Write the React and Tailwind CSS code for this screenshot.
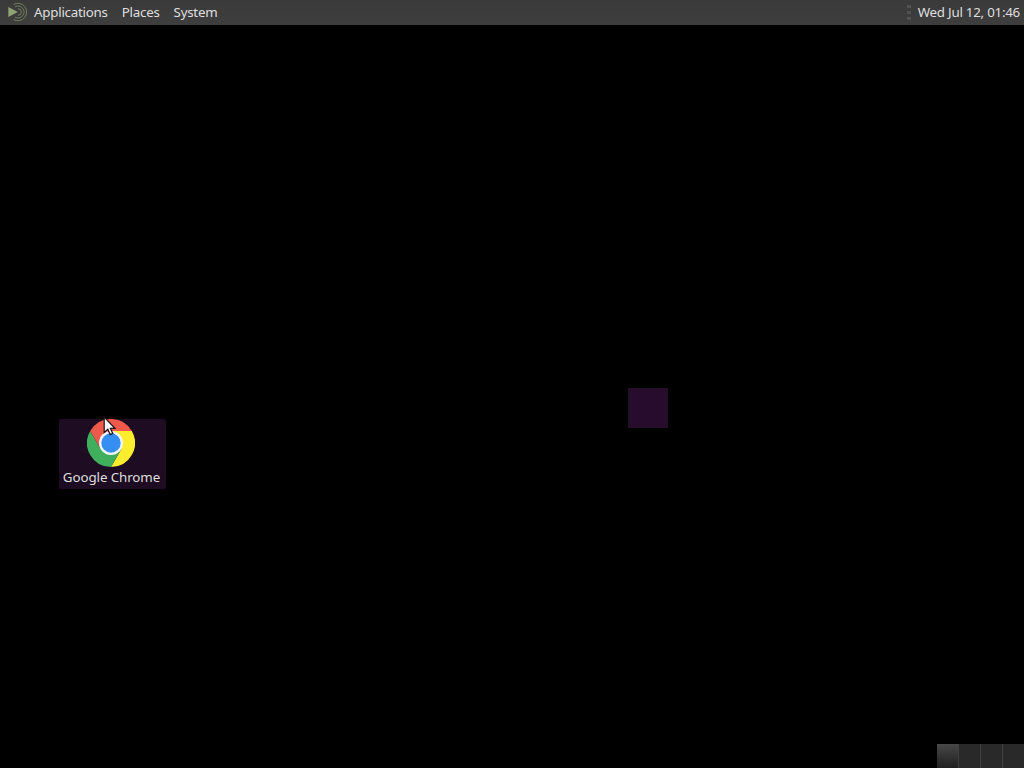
import React from 'react';

const menus = ['Applications', 'Places', 'System'];

function MenuLogo() {
  return (
    <svg width="20" height="20" viewBox="0 0 20 20" fill="none" className="shrink-0">
      <path d="M6.5 2.5A8.7 8.7 0 1 1 6.5 17.5" stroke="#727f5c" strokeWidth="1" />
      <path d="M8 4.9A5.9 5.9 0 1 1 8 15.1" stroke="#727f5c" strokeWidth="1" />
      <path d="M11 6.7a3.3 3.3 0 0 1 0 6.6" stroke="#727f5c" strokeWidth="1" />
      <path d="M1.3 5v10L10.8 10z" fill="#8fa374" />
    </svg>
  );
}

function ChromeIcon() {
  return (
    <svg width="48" height="48" viewBox="0 0 48 48" className="shrink-0">
      <path d="M24 24 3.2 12A24 24 0 0 1 44.8 12H24z" fill="#ed594a" />
      <path d="M24 12h20.8A24 24 0 0 1 24 48l10.4-18z" fill="#fcee2f" />
      <path d="M3.2 12A24 24 0 0 0 24 48l10.4-18H24L13.6 30z" fill="#3fae5d" />
      <path d="M3.2 12 13.6 30 24 24V12z" fill="#ed594a" />
      <circle cx="24" cy="24" r="12" fill="#f4f5fa" />
      <circle cx="24" cy="24" r="9.7" fill="#358ff3" />
    </svg>
  );
}

function Cursor() {
  return (
    <svg width="13" height="20" viewBox="0 0 13 20" className="absolute left-[44px] top-[-3px]">
      <path
        d="M1.2 1.2v15.3l3.6-3.2 2.4 5.3 2.6-1.2-2.4-5.1h4.5z"
        fill="#f7f5f5"
        stroke="#1c1418"
        strokeWidth="1.2"
      />
    </svg>
  );
}

export default function App() {
  return (
    <div className="relative flex h-screen w-full flex-col overflow-hidden bg-black font-['Noto_Sans',sans-serif] text-[13.33px] leading-[18px] text-[#dfdfdf]">
      {/* Top panel */}
      <header className="flex h-[25px] shrink-0 items-center justify-between bg-linear-to-b from-[#3a3a3b] to-[#3e3e3f] pb-[1px] pl-[7px] pr-[4px]">
        <nav className="flex items-center">
          <MenuLogo />
          <div className="ml-[7px] flex gap-[14px]">
            {menus.map((name) => (
              <span key={name} className="whitespace-nowrap tracking-[-0.24px]">{name}</span>
            ))}
          </div>
        </nav>
        <div className="flex items-center">
          <div className="mr-[7px] flex flex-col gap-[3px]">
            <i className="h-[3px] w-1 bg-[#515152]" />
            <i className="h-[3px] w-1 bg-[#515152]" />
            <i className="h-[3px] w-1 bg-[#515152]" />
          </div>
          <time className="whitespace-nowrap tracking-[-0.24px]">Wed Jul 12, 01:46</time>
        </div>
      </header>

      {/* Desktop icons */}
      <div className="absolute left-[59px] top-[419px] flex h-[70px] w-[107px] flex-col items-center rounded-[2px] bg-[#1d0c22] pr-[3px]">
        <ChromeIcon />
        <span className="ml-[1px] mt-[1px] whitespace-nowrap tracking-[-0.08px]">Google Chrome</span>
        <Cursor />
      </div>
      <div className="absolute left-[628px] top-[388px] size-10 border border-[#24122a] bg-[#270c2d]" />

      {/* Workspace switcher */}
      <footer className="mt-auto flex h-6 w-[87px] self-end bg-[#29292a]">
        <div className="w-[21px] bg-linear-to-b from-[#484848] to-[#202020]" />
        <div className="w-[22px] border-l border-[#414142]" />
        <div className="w-[22px] border-l border-[#414142]" />
        <div className="w-[22px] border-l border-[#414142]" />
      </footer>
    </div>
  );
}
